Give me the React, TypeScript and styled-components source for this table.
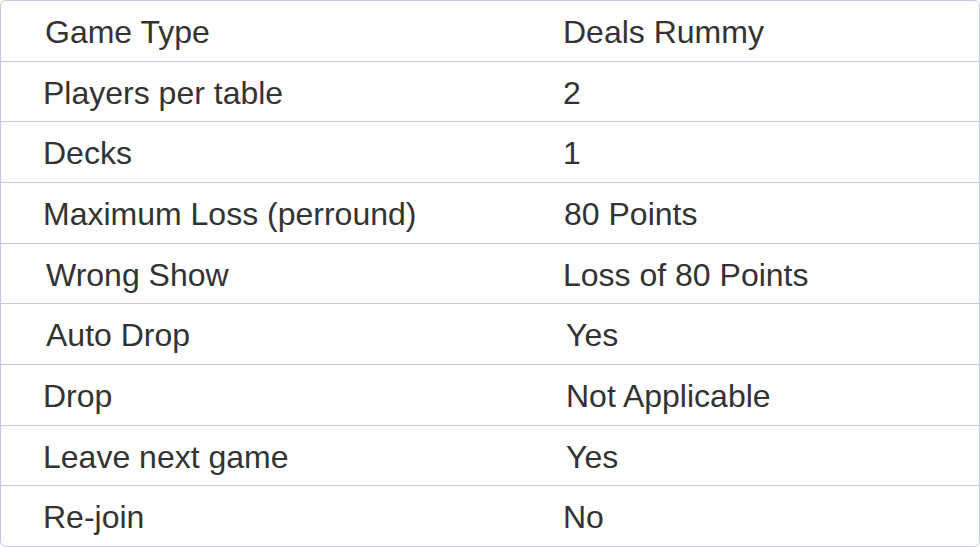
import React from "react";
import styled, { createGlobalStyle } from "styled-components";

const Global = createGlobalStyle`
  html, body { margin: 0; padding: 0; background: #ffffff; }
  body { font-family: "Liberation Sans", Arial, sans-serif; }
`;

const Table = styled.div`
  box-sizing: border-box;
  width: 980px;
  height: 547px;
  border: 1px solid #c3cbe4;
  border-radius: 6px;
  display: flex;
  flex-direction: column;
  overflow: hidden;
  background: #ffffff;
`;

const Row = styled.div`
  flex: 1;
  display: grid;
  grid-template-columns: 520px 1fr;
  align-items: center;
  & + & {
    border-top: 1px solid #c3cbe4;
  }
`;

const Cell = styled.div<{ $shift?: number }>`
  padding-left: ${(p) => 42 + (p.$shift ?? 0)}px;
  padding-top: 2px;
  font-size: 32px;
  line-height: 1;
  color: #333333;
  white-space: nowrap;
`;

const rows: [string, string, number?, number?][] = [
  ["Game Type", "Deals Rummy", 2, 0],
  ["Players per table", "2", 0, 0],
  ["Decks", "1", 0, 0],
  ["Maximum Loss (perround)", "80 Points", 0, 1],
  ["Wrong Show", "Loss of 80 Points", 3, 0],
  ["Auto Drop", "Yes", 3, 3],
  ["Drop", "Not Applicable", 0, 3],
  ["Leave next game", "Yes", 0, 3],
  ["Re-join", "No", 0, 0],
];

export default function App() {
  return (
    <>
      <Global />
      <Table>
        {rows.map(([k, v, a, b]) => (
          <Row key={k}>
            <Cell $shift={a}>{k}</Cell>
            <Cell $shift={b}>{v}</Cell>
          </Row>
        ))}
      </Table>
    </>
  );
}
